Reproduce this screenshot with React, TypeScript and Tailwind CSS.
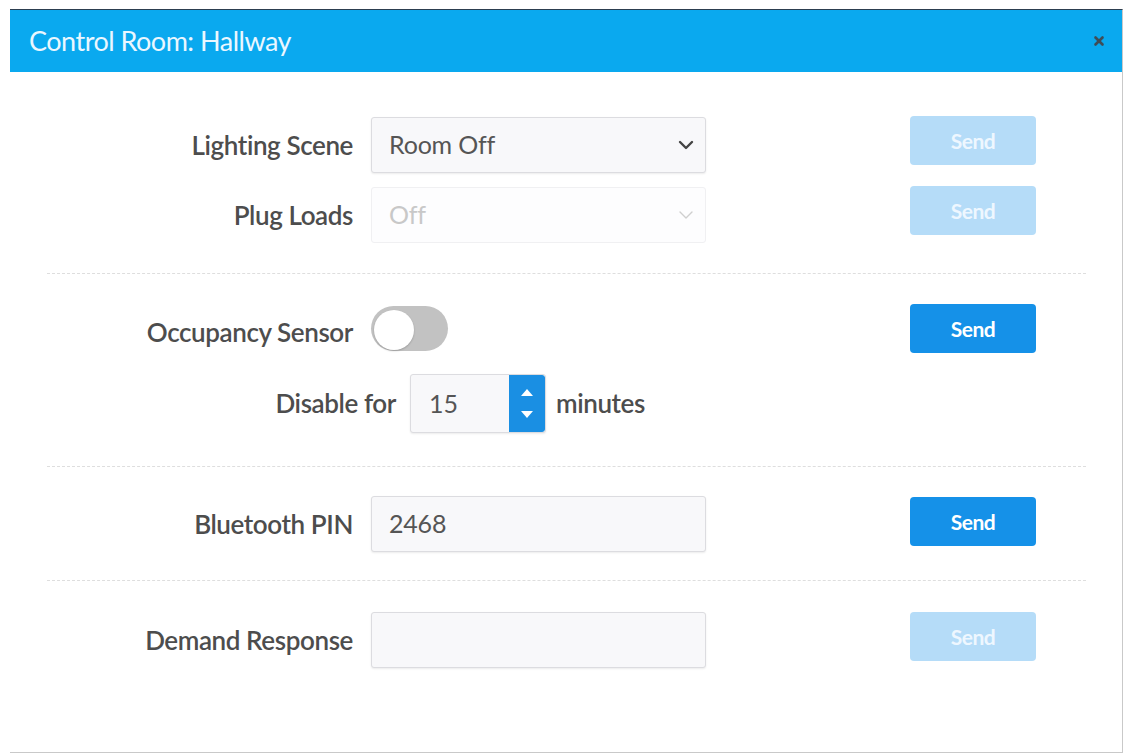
import { ChevronDown, X } from 'lucide-react'

const font = { fontFamily: 'Lato, "Open Sans", sans-serif' }

function Label({ children }: { children: React.ReactNode }) {
  return (
    <div className="flex w-[361px] shrink-0 items-center justify-end pr-[18px] text-[26px] font-semibold tracking-[-0.4px] text-[#4d4d4d]">
      {children}
    </div>
  )
}

function SendButton({ active }: { active?: boolean }) {
  return (
    <button
      className={
        active
          ? 'h-[49px] w-[126px] rounded-[4px] bg-[#1591e8] text-[21px] font-bold tracking-[-0.5px] text-white'
          : 'h-[49px] w-[126px] rounded-[4px] bg-[#b5dcf8] text-[21px] font-bold tracking-[-0.5px] text-[#eef7ff]'
      }
    >
      Send
    </button>
  )
}

function Field({ children, disabled }: { children?: React.ReactNode; disabled?: boolean }) {
  return (
    <div
      className={
        disabled
          ? 'flex h-[56px] w-[335px] items-center rounded-[3px] border border-[#f0f0f2] bg-[#fdfdfe] pl-[17px] pr-[7px] text-[25px] tracking-[-0.2px] text-[#c8c8c8]'
          : 'flex h-[56px] w-[335px] items-center rounded-[3px] border border-[#dcdce0] bg-[#f8f8fa] pl-[17px] pr-[7px] text-[25px] tracking-[-0.2px] text-[#555] shadow-[0_1px_2px_rgba(0,0,0,0.08)]'
      }
    >
      {children}
    </div>
  )
}

function Divider() {
  return <div className="ml-[37px] mr-[36px] border-t border-dashed border-[#dedede]" />
}

export default function App() {
  return (
    <div className="h-[756px] w-[1128px] bg-white pl-[10px] pt-[9px]" style={font}>
      <div className="flex h-[744px] w-[1113px] flex-col border-r border-b border-t border-[#c9c9c9] border-t-[#2c3e50] bg-white">
        <div className="flex h-[62px] shrink-0 items-center justify-between bg-[#0aa9ef] pl-[19px] pr-[16px]">
          <span className="text-[27px] tracking-[-0.5px] text-[#eaf7ff]">Control Room: Hallway</span>
          <X size={14} strokeWidth={4.5} className="text-[#3f4d57]" />
        </div>

        <div className="flex flex-col">
          <div className="mt-[45px] flex items-start">
            <Label>
              <span className="h-[56px] leading-[56px]">Lighting Scene</span>
            </Label>
            <Field>
              <span className="flex-1">Room Off</span>
              <ChevronDown size={24} strokeWidth={2.4} className="text-[#444]" />
            </Field>
            <div className="ml-[204px] -mt-[1px]">
              <SendButton />
            </div>
          </div>

          <div className="mt-[14px] flex items-start">
            <Label>
              <span className="h-[56px] leading-[56px]">Plug Loads</span>
            </Label>
            <Field disabled>
              <span className="flex-1">Off</span>
              <ChevronDown size={24} strokeWidth={1.4} className="text-[#cfcfcf]" />
            </Field>
            <div className="ml-[204px] -mt-[1px]">
              <SendButton />
            </div>
          </div>

          <div className="mt-[30px]">
            <Divider />
          </div>

          <div className="mt-[30px] flex items-start">
            <Label>
              <span className="h-[49px] pt-[4px] leading-[49px]">Occupancy Sensor</span>
            </Label>
            <div className="flex h-[49px] w-[335px] items-center">
              <div className="flex h-[45px] w-[77px] items-center rounded-full bg-[#c2c2c2] px-[3px] pt-[3px]">
                <div className="h-[40px] w-[40px] rounded-full bg-white shadow-[0_1px_2px_rgba(0,0,0,0.2)]" />
              </div>
            </div>
            <div className="ml-[204px]">
              <SendButton active />
            </div>
          </div>

          <div className="mt-[21px] flex items-center">
            <span className="w-[400px] pr-[14px] text-right text-[26px] font-semibold tracking-[-0.4px] text-[#4d4d4d]">
              Disable for
            </span>
            <div className="flex h-[59px] w-[136px] overflow-hidden rounded-[3px] border border-[#dcdce0] bg-[#f8f8fa] shadow-[0_1px_2px_rgba(0,0,0,0.08)]">
              <div className="flex flex-1 items-center pl-[18px] text-[25px] text-[#555]">15</div>
              <div className="flex w-[36px] flex-col items-center justify-center gap-[15px] rounded-r-[3px] bg-[#1a8fe3]">
                <svg width="14" height="8" viewBox="0 0 14 8">
                  <path d="M1 8 L7 1 L13 8 Z" fill="white" />
                </svg>
                <svg width="14" height="8" viewBox="0 0 14 8">
                  <path d="M1 0 L7 7 L13 0 Z" fill="white" />
                </svg>
              </div>
            </div>
            <span className="ml-[10px] text-[26px] font-semibold tracking-[-0.4px] text-[#4d4d4d]">minutes</span>
          </div>

          <div className="mt-[33px]">
            <Divider />
          </div>

          <div className="mt-[29px] flex items-start">
            <Label>
              <span className="h-[56px] leading-[56px]">Bluetooth PIN</span>
            </Label>
            <Field>
              <span>2468</span>
            </Field>
            <div className="ml-[204px] mt-[1px]">
              <SendButton active />
            </div>
          </div>

          <div className="mt-[28px]">
            <Divider />
          </div>

          <div className="mt-[31px] flex items-start">
            <Label>
              <span className="h-[56px] leading-[56px]">Demand Response</span>
            </Label>
            <Field />
            <div className="ml-[204px]">
              <SendButton />
            </div>
          </div>
        </div>
      </div>
    </div>
  )
}
